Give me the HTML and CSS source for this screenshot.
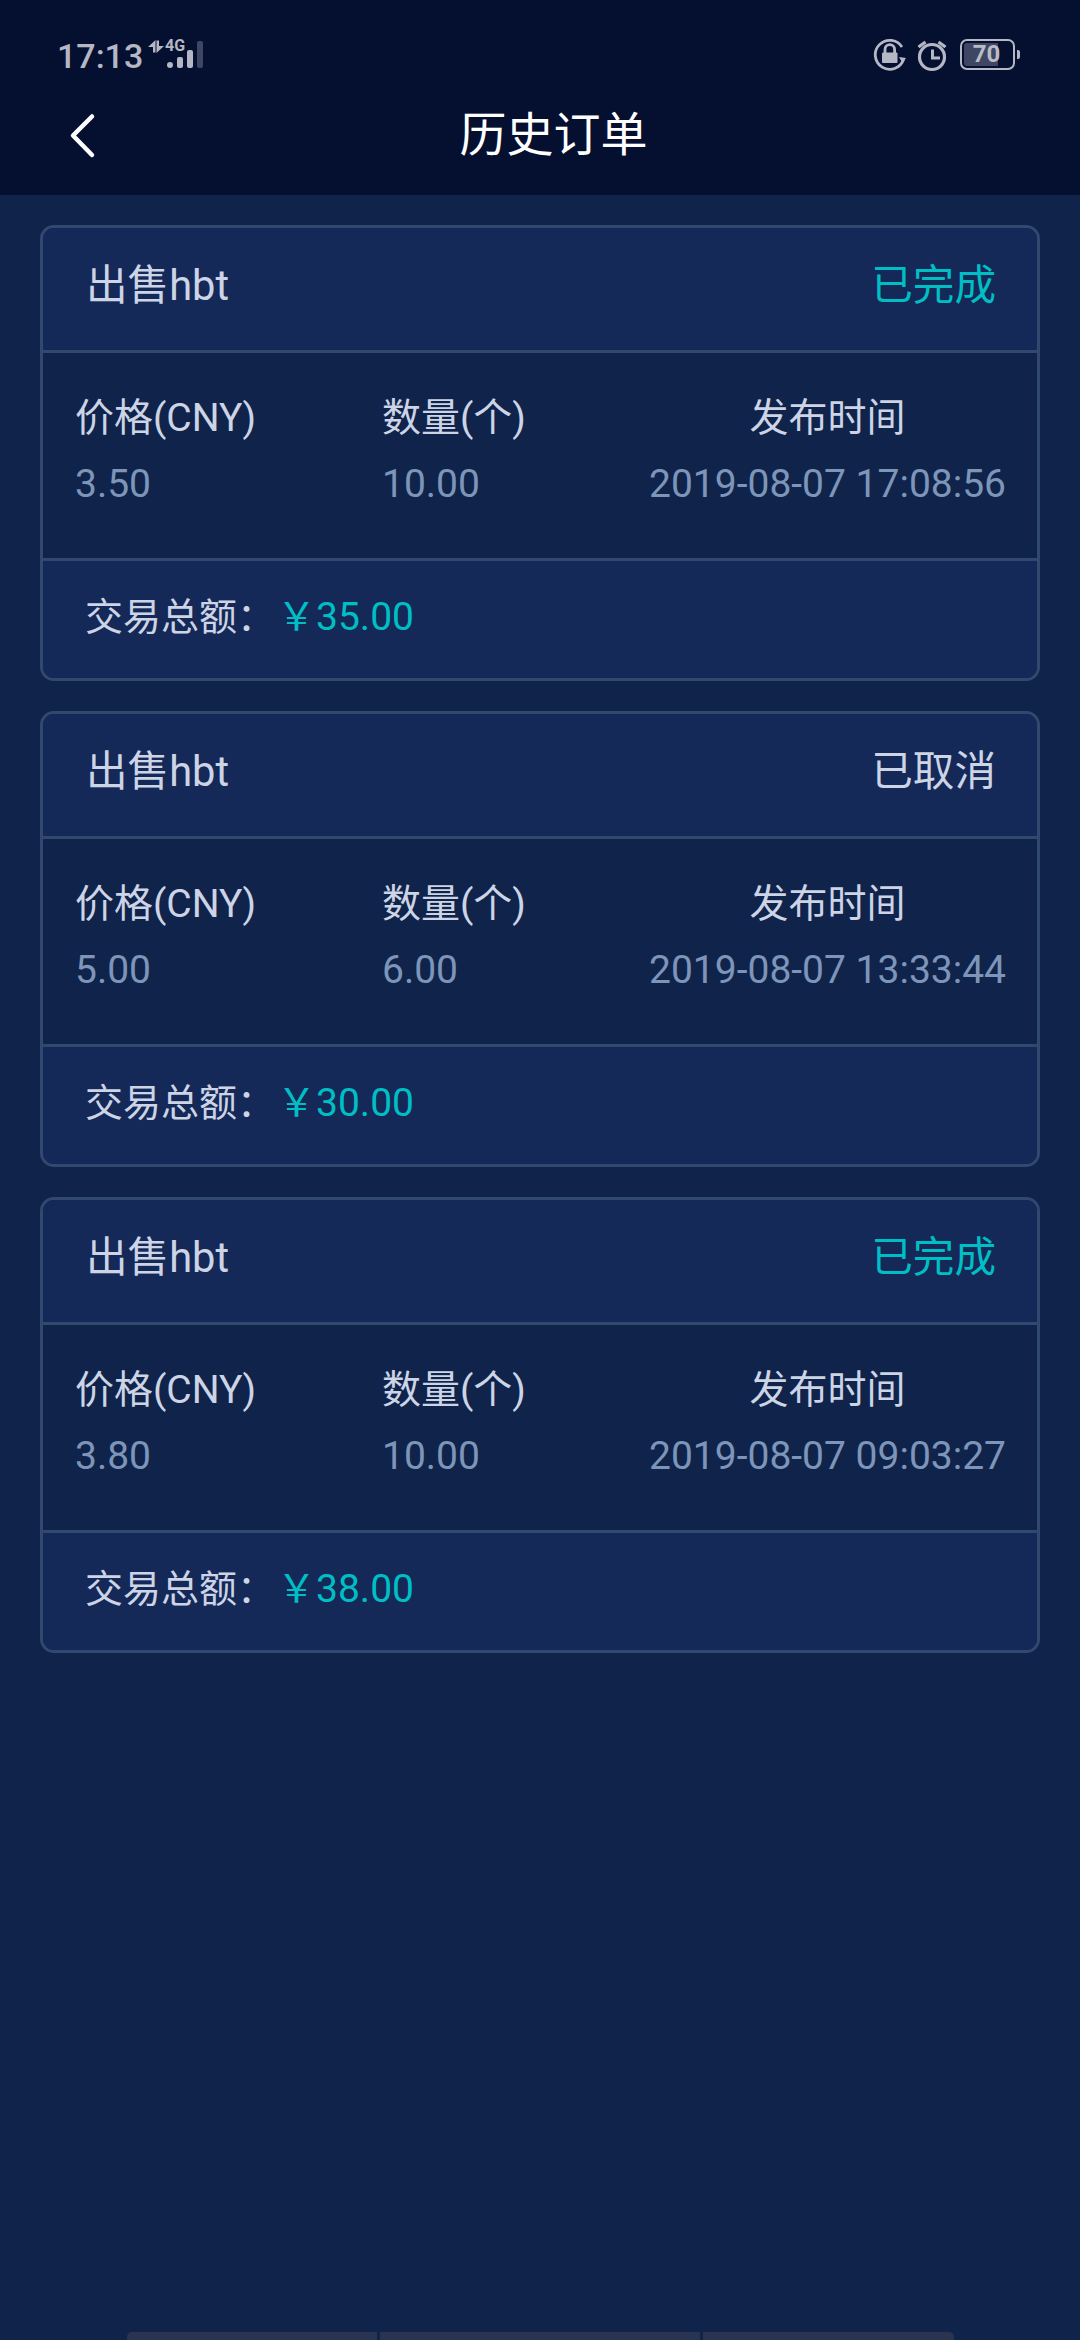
FILE: index.html
```html
<!DOCTYPE html>
<html lang="zh">
<head>
<meta charset="utf-8">
<title>历史订单</title>
<link rel="stylesheet" href="styles.css">
</head>
<body>
<div class="page">
  <header class="header">
    <div class="status">
      <div class="status-left">
        <span class="clock">17:13</span>
        <svg class="arrows" width="16" height="13" viewBox="0 0 16 13"><path d="M7.500 0v12.500H5V7H0zM8.500 13V.5H11V6h5z" fill="#b5b8c4"/></svg>
        <div class="net">
          <span class="net-label">4G</span>
          <div class="bars">
            <i class="bar b1"></i><i class="bar b2"></i><i class="bar b3"></i>
          </div>
        </div>
        <i class="bar b4"></i>
      </div>
      <div class="status-right">
        <svg class="ico" width="34" height="34" viewBox="0 0 34 34" fill="none">
          <path d="M30.500 21.500A14.500 14.500 0 1 1 29 9" stroke="#b5b8c4" stroke-width="2.800"/>
          <path d="M33 20l-7-1 3.500 6z" fill="#b5b8c4"/>
          <path d="M12 15v-3.500a4.800 4.800 0 0 1 9.600 0V15" stroke="#b5b8c4" stroke-width="2.800"/>
          <rect x="9" y="14.500" width="15.500" height="10.500" rx="1" fill="#b5b8c4"/>
        </svg>
        <svg class="ico" width="30" height="34" viewBox="0 0 30 34" fill="none">
          <circle cx="15" cy="19" r="12.500" stroke="#b5b8c4" stroke-width="3.200"/>
          <path d="M15.500 11.500V20H23" stroke="#b5b8c4" stroke-width="3"/>
          <path d="M1.500 9l7-5M28.500 9l-7-5" stroke="#b5b8c4" stroke-width="3.200"/>
        </svg>
        <div class="battery">
          <div class="cell"><i class="fill"></i><span class="level">70</span></div>
          <i class="nub"></i>
        </div>
      </div>
    </div>
    <div class="nav">
      <svg class="back" width="28" height="46" viewBox="0 0 28 46" fill="none"><path d="M23 3.500L4 22.500 23 42" stroke="#fff" stroke-width="4.500" stroke-linecap="round" stroke-linejoin="round"/></svg>
      <h1 class="title">历史订单</h1>
    </div>
  </header>

  <main class="list">
    <section class="card">
      <div class="card-head"><span class="kind">出售hbt</span><span class="state done">已完成</span></div>
      <div class="card-body">
        <div class="cell-col"><div class="label">价格(CNY)</div><div class="value">3.50</div></div>
        <div class="cell-col"><div class="label">数量(个)</div><div class="value">10.00</div></div>
        <div class="cell-col time"><div class="label">发布时间</div><div class="value">2019-08-07 17:08:56</div></div>
      </div>
      <div class="card-foot"><span class="sum-label">交易总额：</span><span class="sum">￥35.00</span></div>
    </section>
    <section class="card">
      <div class="card-head"><span class="kind">出售hbt</span><span class="state">已取消</span></div>
      <div class="card-body">
        <div class="cell-col"><div class="label">价格(CNY)</div><div class="value">5.00</div></div>
        <div class="cell-col"><div class="label">数量(个)</div><div class="value">6.00</div></div>
        <div class="cell-col time"><div class="label">发布时间</div><div class="value">2019-08-07 13:33:44</div></div>
      </div>
      <div class="card-foot"><span class="sum-label">交易总额：</span><span class="sum">￥30.00</span></div>
    </section>
    <section class="card">
      <div class="card-head"><span class="kind">出售hbt</span><span class="state done">已完成</span></div>
      <div class="card-body">
        <div class="cell-col"><div class="label">价格(CNY)</div><div class="value">3.80</div></div>
        <div class="cell-col"><div class="label">数量(个)</div><div class="value">10.00</div></div>
        <div class="cell-col time"><div class="label">发布时间</div><div class="value">2019-08-07 09:03:27</div></div>
      </div>
      <div class="card-foot"><span class="sum-label">交易总额：</span><span class="sum">￥38.00</span></div>
    </section>
  </main>

  <div class="peek">
    <i class="peek-seg first"></i><i class="peek-seg mid"></i><i class="peek-seg last"></i>
  </div>
</div>
</body>
</html>
```
FILE: styles.css
```css
* { box-sizing: border-box; }
html, body { margin: 0; padding: 0; }
body {
  width: 1080px;
  height: 2340px;
  overflow: hidden;
  background: #10244b;
  font-family: Roboto, "Noto Sans CJK SC", sans-serif;
}
.page {
  height: 2340px;
  display: flex;
  flex-direction: column;
}
.header {
  height: 195px;
  flex: none;
  background: #050f30;
}
.status {
  height: 97px;
  padding: 23px 60px 0 57px;
  display: flex;
  justify-content: space-between;
}
.status-left {
  display: flex;
  align-items: flex-end;
  height: 45px;
}
.clock {
  font-size: 34px;
  font-weight: 500;
  line-height: 24px;
  color: #b5b8c4;
  width: 91px;
}
.arrows { align-self: flex-start; margin-top: 17px; }
.net {
  display: flex;
  flex-direction: column;
  align-items: flex-start;
  margin-left: 3px;
  width: 26px;
  height: 45px;
  justify-content: flex-end;
}
.net-label {
  font-size: 16px;
  font-weight: 700;
  line-height: 14px;
  color: #b5b8c4;
  margin: 0 0 -3px -2px;
}
.bars { display: flex; align-items: flex-end; gap: 4px; }
.bar { display: block; width: 6px; border-radius: 2px; background: #b5b8c4; }
.b1 { height: 6px; border-radius: 3px; }
.b2 { height: 11px; }
.b3 { height: 18px; }
.b4 { height: 27px; margin-left: 4px; background: #3e4663; }
.status-right {
  display: flex;
  align-items: flex-start;
  gap: 10px;
  padding-top: 15px;
}
.ico { display: block; }
.battery { display: flex; align-items: center; margin-left: 3px; height: 32px; }
.cell {
  position: relative;
  width: 55px;
  height: 31px;
  border: 2px solid #b5b8c4;
  border-radius: 7px;
  display: flex;
  align-items: center;
  justify-content: center;
  padding-right: 2px;
}
.fill {
  position: absolute;
  left: 2px; top: 2px; bottom: 2px;
  width: 34px;
  background: #3e4663;
  border-radius: 3px 0 0 3px;
}
.level {
  position: relative;
  font-size: 24px;
  font-weight: 700;
  line-height: 27px;
  color: #b9bcc7;
}
.nub { display: block; width: 3px; height: 9px; margin-left: 2px; border-radius: 0 2px 2px 0; background: #b5b8c4; }
.nav {
  position: relative;
  height: 98px;
  display: flex;
  align-items: center;
  padding-left: 69px;
}
.back { display: block; margin-top: -20px; }
.title {
  position: absolute;
  left: 0; right: 0; top: 10px;
  margin: 0;
  padding-left: 27px;
  text-align: center;
  font-size: 47px;
  font-weight: 400;
  line-height: 56px;
  color: #fff;
}
.list {
  padding: 30px 40px 0;
  display: flex;
  flex-direction: column;
  gap: 30px;
}
.card {
  height: 456px;
  border: 3px solid #31486f;
  border-radius: 14px;
  overflow: hidden;
  display: flex;
  flex-direction: column;
}
.card-head {
  height: 125px;
  flex: none;
  background: #152958;
  border-bottom: 3px solid #31486f;
  padding: 0 41px 6px 43px;
  display: flex;
  justify-content: space-between;
  align-items: center;
}
.kind { font-size: 41.6px; line-height: 48px; color: #ccd4e6; }
.state { font-size: 41.6px; line-height: 48px; color: #ccd4e6; }
.state.done { color: #00bfc4; }
.card-body {
  height: 208px;
  flex: none;
  background: #10244b;
  border-bottom: 3px solid #31486f;
  padding: 32px 31px 0 32px;
  display: grid;
  grid-template-columns: 307px 1fr auto;
  align-content: start;
}
.label { font-size: 39px; line-height: 66px; color: #ccd4e6; }
.value { font-size: 39px; line-height: 66px; color: #7d95b9; }
.time { text-align: center; }
.card-foot {
  flex: 1;
  background: #152958;
  padding: 0 0 6px 42px;
  display: flex;
  align-items: center;
}
.sum-label { font-size: 38px; line-height: 44px; color: #ccd4e6; }
.sum { font-size: 39px; line-height: 44px; color: #00bfc4; margin-left: 2px; }
.peek {
  margin-top: auto;
  height: 8px;
  display: flex;
  gap: 3px;
  padding: 0 126px 0 127px;
}
.peek-seg { display: block; height: 8px; background: #283450; }
.first { width: 250px; border-radius: 5px 0 0 0; }
.mid { width: 320px; }
.last { width: 251px; border-radius: 0 5px 0 0; }
```
